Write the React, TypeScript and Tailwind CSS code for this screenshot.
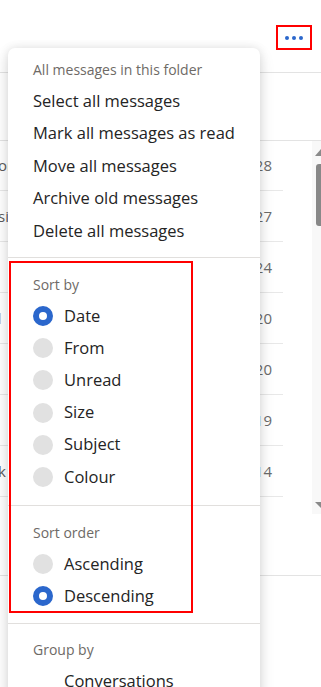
import { ReactNode } from "react";

const rows = [
  { lead: "or", date: "28", tone: "text-[#5c5c5c]" },
  { lead: "si", date: "27", tone: "text-[#5c5c5c]" },
  { lead: "", date: "24", tone: "text-[#5c5c5c]" },
  { lead: "l", date: "20", tone: "text-[#b0b0b0]" },
  { lead: "", date: "20", tone: "text-[#5c5c5c]" },
  { lead: "", date: "19", tone: "text-[#5c5c5c]" },
  { lead: "k", date: "14", tone: "text-[#5c5c5c]" },
];

function Heading({ children }: { children: ReactNode }) {
  return <div className="flex h-8 items-center text-[14px] text-[#6e6a66]">{children}</div>;
}

function Radio({ label, checked }: { label: string; checked?: boolean }) {
  return (
    <div className="flex h-[32.2px] items-center gap-[11px]">
      {checked ? (
        <span className="h-5 w-5 rounded-full border-[6px] border-[#2b67cc] bg-white" />
      ) : (
        <span className="h-5 w-5 rounded-full bg-[#e1e1e1]" />
      )}
      <span>{label}</span>
    </div>
  );
}

export default function App() {
  return (
    <div className="relative h-[687px] w-[321px] overflow-hidden bg-white font-['Open_Sans',sans-serif] text-[#242424]">
      {/* header with the overflow button */}
      <div className="flex h-[73px] items-start justify-end border-b border-[#e3e3e3] pr-[9px] pt-[25px]">
        <button className="flex h-[25px] w-[36px] items-center justify-center gap-[3px] border-2 border-[#ff0000]">
          <span className="h-1 w-1 rounded-full bg-[#2b67cc]" />
          <span className="h-1 w-1 rounded-full bg-[#2b67cc]" />
          <span className="h-1 w-1 rounded-full bg-[#2b67cc]" />
        </button>
      </div>
      <div className="h-[68px] border-b border-[#e3e3e3]" />

      {/* message list behind the menu */}
      <div className="flex h-[435px] border-b border-[#e3e3e3]">
        <div className="-mt-px w-[283px]">
          {rows.map((r, i) => (
            <div key={i} className="flex h-[51px] items-center border-b border-[#e8e8e8] pr-[11px] text-[15px]">
              <span className={`-ml-[2px] whitespace-nowrap ${r.tone}`}>{r.lead}</span>
              <span className="ml-auto text-[#6b6b6b]">{r.date}</span>
            </div>
          ))}
        </div>
        <div className="ml-auto flex h-[373px] w-[9px] flex-col items-end bg-[#f8f8f8] pt-[8px]">
          <svg width="6" height="7" viewBox="0 0 6 7">
            <path d="M6 0 L6 7 L0 7 Z" fill="#8a8a8a" />
          </svg>
          <div className="mt-[8px] h-[62px] w-[5px] rounded-l-[3px] bg-[#888888]" />
          <svg width="6" height="6" viewBox="0 0 6 6" className="mb-[6px] mt-auto">
            <path d="M0 0 L6 0 L6 6 Z" fill="#8a8a8a" />
          </svg>
        </div>
      </div>

      {/* context menu */}
      <div className="absolute left-[8px] top-[48px] w-[252px] rounded-[7px] bg-white text-[16.5px] shadow-[0_0_10px_rgba(0,0,0,0.1),0_6px_16px_rgba(0,0,0,0.12)]">
        <div className="px-[25px] pb-[9.5px] pt-[5px]">
          <Heading>All messages in this folder</Heading>
          {["Select all messages", "Mark all messages as read", "Move all messages", "Archive old messages", "Delete all messages"].map((t) => (
            <div key={t} className="flex h-[32.5px] items-center">
              {t}
            </div>
          ))}
        </div>
        <div className="border-t border-[#e1dfdd] px-[25px] pb-[12px] pt-[10px]">
          <Heading>Sort by</Heading>
          <Radio label="Date" checked />
          <Radio label="From" />
          <Radio label="Unread" />
          <Radio label="Size" />
          <Radio label="Subject" />
          <Radio label="Colour" />
        </div>
        <div className="border-t border-[#e1dfdd] px-[25px] pb-[10px] pt-[10px]">
          <Heading>Sort order</Heading>
          <Radio label="Ascending" />
          <Radio label="Descending" checked />
        </div>
        <div className="border-t border-[#e1dfdd] px-[25px] pb-[10px] pt-[10px]">
          <Heading>Group by</Heading>
          <div className="flex h-8 items-center pl-[31px]">Conversations</div>
          <div className="flex h-8 items-center pl-[31px]">Messages</div>
        </div>
      </div>

      {/* annotation box */}
      <div className="absolute left-[9px] top-[261px] h-[352px] w-[184px] border-2 border-[#ff0000]" />
    </div>
  );
}
